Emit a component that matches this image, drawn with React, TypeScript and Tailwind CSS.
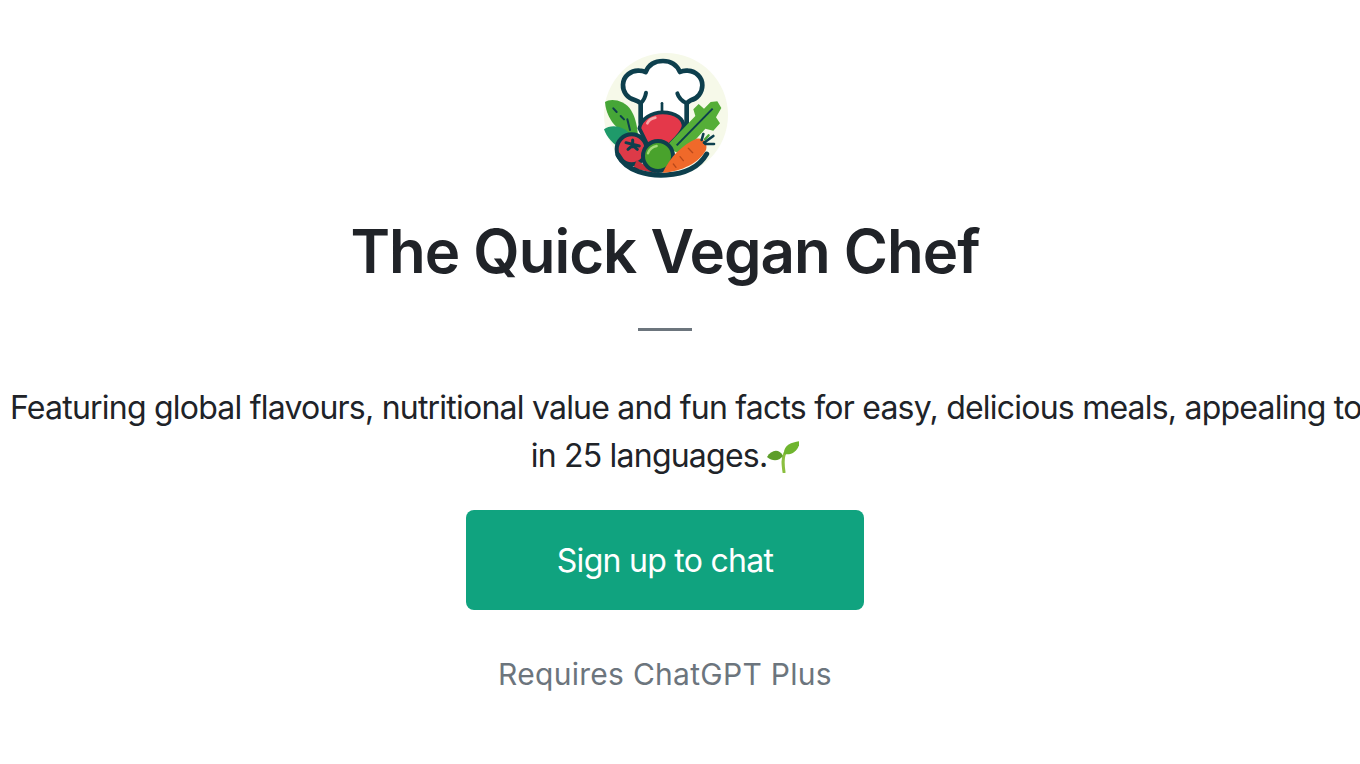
const LOGO_DARK = "#0d3f4d";

function Logo() {
  return (
    <svg width="150" height="150" viewBox="0 0 450 450" className="block">
      <circle cx="228" cy="225" r="186" fill="#f6f9e9" />
      {/* chef hat */}
      <path
        d="M152 250 L152 190 C146 184 140 182 134 180 C112 174 98 156 99 134 C100 108 124 90 148 92 C154 92 160 93 167 96 C176 74 196 63 219 63 C242 63 260 74 270 96 C278 92 286 91 294 92 C318 94 337 112 337 136 C337 158 322 176 302 181 C298 183 294 186 290 190 L290 255 Z"
        fill="#ffffff"
        stroke={LOGO_DARK}
        strokeWidth="14"
        strokeLinejoin="round"
      />
      <path d="M152 190 C158 184 166 172 168 158" fill="none" stroke={LOGO_DARK} strokeWidth="12" strokeLinecap="round" />
      <path d="M290 190 C278 184 266 174 262 160" fill="none" stroke={LOGO_DARK} strokeWidth="12" strokeLinecap="round" />
      <path d="M216 190 L216 212" fill="none" stroke={LOGO_DARK} strokeWidth="8" strokeLinecap="round" />
      {/* leaves */}
      <path d="M45 186 C60 174 104 178 124 212 C138 236 142 262 144 288 C100 288 50 250 45 186 Z" fill="#46a637" />
      <path d="M70 205 L80 216 M92 228 L102 238 M112 238 L120 270" stroke={LOGO_DARK} strokeWidth="6" strokeLinecap="round" fill="none" />
      <path d="M42 268 C62 252 102 256 122 285 L92 324 C72 316 50 292 42 268 Z" fill="#1f9a6a" />
      {/* red pepper */}
      <path d="M148 265 C153 236 185 217 218 217 C257 217 284 238 280 262 C272 284 252 300 234 318 L172 314 Z" fill="#e4384a" stroke={LOGO_DARK} strokeWidth="11" />
      <path d="M172 250 C176 240 186 235 196 233" stroke="#f8a5a8" strokeWidth="8" fill="none" strokeLinecap="round" />
      {/* celery */}
      <path d="M226 322 L316 228 L310 208 L326 192 L342 206 L362 186 L382 184 L394 204 L378 232 L390 250 L370 272 L346 266 L276 344 Z" fill="#55ae38" />
      <path d="M260 316 L368 206" stroke={LOGO_DARK} strokeWidth="6" fill="none" />
      {/* tomato */}
      <circle cx="125" cy="328" r="45" fill="#dd3a48" stroke={LOGO_DARK} strokeWidth="12" />
      <path d="M128 300 L128 320 M108 308 L148 318 M114 328 L128 316 L142 328" stroke={LOGO_DARK} strokeWidth="9" strokeLinecap="round" fill="none" />
      {/* bowl */}
      <path d="M140 360 L205 402 L130 385 Z" fill="#c72f3a" />
      <path d="M84 345 C110 395 175 408 228 405 C280 402 325 385 350 342" fill="none" stroke={LOGO_DARK} strokeWidth="15" strokeLinecap="round" />
      {/* green pea */}
      <circle cx="204" cy="348" r="45" fill="#49a22c" stroke={LOGO_DARK} strokeWidth="12" />
      <path d="M174 340 C178 328 188 320 200 318" stroke="#a3dc78" strokeWidth="7" fill="none" strokeLinecap="round" />
      {/* carrot */}
      <path d="M218 398 C240 350 280 312 320 296 C340 292 354 310 348 330 C328 368 275 395 218 398 Z" fill="#f0692a" />
      <path d="M270 350 L280 362 M295 325 L308 338 M250 372 L258 382" stroke="#b8481a" strokeWidth="4" strokeLinecap="round" />
      <path d="M335 300 L340 282 M342 308 L370 288 M346 312 L372 312" stroke={LOGO_DARK} strokeWidth="8" strokeLinecap="round" />
      <path d="M345 298 L356 286" stroke="#46a637" strokeWidth="7" strokeLinecap="round" />
    </svg>
  );
}

function Sprout() {
  return (
    <svg width="32" height="32" viewBox="0 0 32 32" className="inline-block align-[-6px]">
      <path d="M17 31 C16 24 15 17 18 12" fill="none" stroke="#8bbf3f" strokeWidth="3" strokeLinecap="round" />
      <path d="M16 15 C12 7 4 9 0 16 C6 21 12 20 16 15 Z" fill="#5d9e2a" />
      <path d="M17 13 C16 4 25 1 33 0 C32 8 26 15 17 13 Z" fill="#6fb52f" />
    </svg>
  );
}

export default function App() {
  return (
    <div className="h-[764px] w-[1360px] overflow-hidden bg-white font-['Inter','Liberation_Sans',sans-serif] text-[#202328]">
      <div className="flex w-[1330px] flex-col items-center pt-[40px]">
        <Logo />
        <h1 className="mt-[25px] text-[60px] font-semibold leading-[72px] tracking-[-1px]">The Quick Vegan Chef</h1>
        <div className="mt-[41px] h-[3px] w-[54px] bg-[#6c757d]" />
        <div className="mt-[53px] w-[1310px] text-center text-[32px] leading-[48px] tracking-[-0.78px]">
          <div className="whitespace-nowrap text-left">
            Featuring global flavours, nutritional value and fun facts for easy, delicious meals, appealing to
          </div>
          <div>
            in 25 languages.
            <Sprout />
          </div>
        </div>
        <button className="mt-[30px] h-[100px] w-[398px] rounded-[8px] bg-[#10a37f] pt-[2px] text-[32px] font-normal tracking-[-0.73px] text-white">
          Sign up to chat
        </button>
        <p className="mt-[42px] text-[30px] leading-[45px] tracking-[0.28px] text-[#6c757d]">Requires ChatGPT Plus</p>
      </div>
    </div>
  );
}
